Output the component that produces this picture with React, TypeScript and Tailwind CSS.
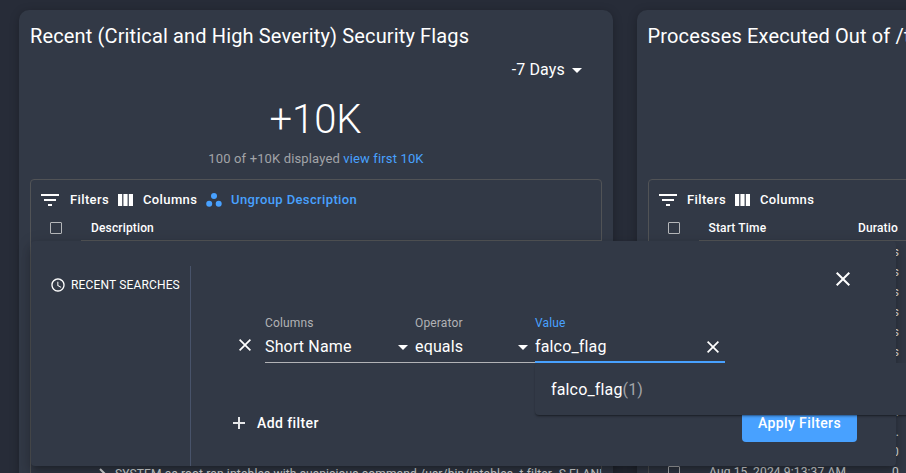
import React from "react";

function FilterIcon() {
  return (
    <svg width="18" height="12" viewBox="0 0 18 12" fill="#fff" className="shrink-0">
      <path d="M0 0h18v2H0zM3 5h12v2H3zM7 10h4v2H7z" />
    </svg>
  );
}

function ColumnsIcon() {
  return (
    <svg width="15" height="12" viewBox="0 0 15 12" fill="#fff" className="shrink-0">
      <path d="M0 0h4.2v12H0zM5.4 0h4.2v12H5.4zM10.8 0H15v12h-4.2z" />
    </svg>
  );
}

function GroupIcon() {
  return (
    <svg width="16" height="14" viewBox="0 0 16 14" fill="#48a1ff" className="shrink-0">
      <circle cx="8" cy="3" r="3" />
      <circle cx="3.2" cy="10.7" r="3" />
      <circle cx="12.7" cy="10.7" r="3" />
    </svg>
  );
}

function Caret() {
  return (
    <svg width="10" height="5" viewBox="0 0 10 5" fill="#fff" className="shrink-0">
      <path d="M0 0h10L5 5z" />
    </svg>
  );
}

function Cross({ size }: { size: number }) {
  return (
    <svg width={size} height={size} viewBox="0 0 14 14" fill="#fff" className="shrink-0">
      <path d="M14 1.41 12.59 0 7 5.59 1.41 0 0 1.41 5.59 7 0 12.59 1.41 14 7 8.41 12.59 14 14 12.59 8.41 7z" />
    </svg>
  );
}

function ClockIcon() {
  return (
    <svg width="16" height="16" viewBox="0 0 24 24" fill="#fff" className="shrink-0">
      <path d="M11.99 2C6.47 2 2 6.48 2 12s4.47 10 9.99 10C17.52 22 22 17.52 22 12S17.52 2 11.99 2zM12 20c-4.42 0-8-3.58-8-8s3.58-8 8-8 8 3.58 8 8-3.58 8-8 8zm.5-13H11v6l5.25 3.15.75-1.23-4.5-2.67z" />
    </svg>
  );
}

function Checkbox() {
  return <span className="size-3 shrink-0 rounded-[1px] border border-[#b5b7ba]" />;
}

function Toolbar({ grouped }: { grouped?: boolean }) {
  return (
    <div className="flex h-[37px] items-center pl-[10px] pt-[3px] text-[13px] font-medium tracking-[0.37px]">
      <FilterIcon />
      <span className={grouped ? "ml-[11px] w-12" : "ml-[10px] w-12"}>Filters</span>
      <ColumnsIcon />
      <span className="ml-[10px] w-[63px]">Columns</span>
      {grouped && (
        <>
          <GroupIcon />
          <span className="ml-[9px] text-[#48a1ff]">Ungroup Description</span>
        </>
      )}
    </div>
  );
}

const durations = ["0.5s", "0.5s", "0.5s", "0.5s", "0.5s", "0.5s", "0.5s", "0.5s", "0.", "0.", "0", "0"];

function Dialog() {
  return (
    <section className="absolute left-[31px] top-[241px] flex h-[225px] w-[865px] rounded-[4px] bg-[#323946] shadow-[0_5px_5px_-3px_rgba(0,0,0,0.2),0_8px_10px_1px_rgba(0,0,0,0.14),0_3px_14px_2px_rgba(0,0,0,0.12)]">
      <aside className="mt-[25px] w-40 border-r border-[#48536a] pl-[19px] pt-[9px]">
        <div className="flex items-center gap-[5px] text-xs leading-4 tracking-[0.15px]">
          <ClockIcon />
          <span className="whitespace-nowrap pt-[2px] leading-[17px]">RECENT SEARCHES</span>
        </div>
      </aside>
      <div className="flex flex-1 flex-col">
        <div className="flex h-[74px] justify-end pr-[46px] pt-[31px]">
          <Cross size={14} />
        </div>
        <div className="flex pl-[48px]">
          <div className="w-[26px] pt-[24px]">
            <Cross size={12} />
          </div>
          <label className="flex h-12 w-[150px] flex-col border-b border-[#b2b3b6]">
            <span className="text-xs leading-4 tracking-[0.15px] text-[#b1b2b5]">Columns</span>
            <span className="flex items-center justify-between pr-[7px] pt-1 text-base leading-6 tracking-[0.15px]">Short Name <Caret /></span>
          </label>
          <label className="flex h-12 w-[120px] flex-col border-b border-[#b2b3b6]">
            <span className="text-xs leading-4 tracking-[0.15px] text-[#b1b2b5]">Operator</span>
            <span className="flex items-center justify-between pr-[7px] pt-1 text-base leading-6 tracking-[0.15px]">equals <Caret /></span>
          </label>
          <label className="flex h-12 w-[190px] flex-col border-b-2 border-[#48a1ff]">
            <span className="text-xs leading-4 tracking-[0.15px] text-[#48a1ff]">Value</span>
            <span className="flex items-center justify-between pr-[6px] pt-1 text-base leading-6 tracking-[0.15px]">falco_flag <Cross size={12} /></span>
          </label>
        </div>
        <div className="mt-[41px] flex items-center justify-between pl-[42px] pr-[39px]">
          <button className="flex items-center gap-3 text-sm font-medium tracking-[0.4px]">
            <svg width="12" height="12" viewBox="0 0 12 12" fill="#e6e7e9"><path d="M5 0h2v5h5v2H7v5H5V7H0V5h5z" /></svg>
            Add filter
          </button>
          <button className="h-[38px] w-[115px] rounded-[4px] bg-[#48a1ff] text-sm font-medium tracking-[0.4px]">Apply Filters</button>
        </div>
      </div>
    </section>
  );
}

export default function App() {
  return (
    <main className="relative h-[473px] w-[906px] overflow-hidden bg-[#272c38] font-[Roboto,sans-serif] text-white">
      <div className="flex w-[1250px] gap-6 pl-[19px] pt-[10px]">
        <article className="h-[480px] w-[594px] rounded-[10px] bg-[#323946] px-[11px] shadow-[0_2px_10px_rgba(0,0,0,0.25)]">
          <h2 className="pt-[11px] text-xl leading-[30px] tracking-[0.14px]">Recent (Critical and High Severity) Security Flags</h2>
          <div className="mt-[7px] flex h-6 items-center justify-end gap-[7px] pr-5 text-base tracking-[0.15px]">
            -7 Days <Caret />
          </div>
          <div className="mt-[13px] pr-px text-center text-[40px] font-light leading-[50px]">+10K</div>
          <p className="mt-[4px] text-center text-[13px] leading-5 tracking-[0.14px] text-[#a2a4a8]">
            100 of +10K displayed <span className="text-[#48a1ff]">view first 10K</span>
          </p>
          <div className="mt-[10px] h-[320px] w-[572px] overflow-hidden rounded-t-[4px] border border-[#515356]">
            <Toolbar grouped />
            <div className="flex h-[23px] items-center pb-0.5 pl-[19px] text-xs font-medium tracking-[0.15px]">
              <Checkbox />
              <span className="ml-[29px]">Description</span>
            </div>
            <div className="ml-[50px] h-[224px] border-t border-[#515356]" />
            <div className="flex h-5 items-center pl-[67px] text-xs tracking-[0.15px] text-[#dfe0e2]">
              <svg width="9" height="12" viewBox="0 0 9 12" fill="none" stroke="currentColor" strokeWidth="2" className="shrink-0"><path d="m2 1 5 5-5 5" /></svg>
              <span className="ml-2 whitespace-nowrap">SYSTEM as root ran iptables with suspicious command /usr/bin/iptables -t filter -S FLANNEL-FWD</span>
            </div>
          </div>
        </article>
        <article className="h-[480px] w-[594px] rounded-[10px] bg-[#323946] px-[11px] shadow-[0_2px_10px_rgba(0,0,0,0.25)]">
          <h2 className="-ml-[0.5px] pt-[11px] text-xl leading-[30px] tracking-[0.14px]">Processes Executed Out of /tmp</h2>
          <div className="mt-[128px] h-[320px] w-[572px] overflow-hidden rounded-t-[4px] border border-[#515356]">
            <Toolbar />
            <div className="flex h-[23px] items-center pb-0.5 pl-[19px] text-xs font-medium tracking-[0.15px]">
              <Checkbox />
              <span className="ml-[28.5px] w-[149.5px]">Start Time</span>
              <span className="w-10 overflow-hidden">Duration</span>
            </div>
            <div className="mb-px ml-[50px] border-t border-[#515356]" />
            {durations.map((duration, index) => (
              <div key={index} className="flex h-5 items-center pl-[19px] text-xs tracking-[0.15px] text-[#dfe0e2]">
                <Checkbox />
                <span className="ml-[29px] w-[149px]">Aug 15, 2024 9:13:37 AM</span>
                <span className="w-[41px] text-right">{duration}</span>
              </div>
            ))}
          </div>
        </article>
      </div>
      <Dialog />
      <div className="absolute left-[535px] top-[363px] h-[52px] w-[400px] rounded-[4px] bg-[#323946] pl-4 pt-[15px] text-base leading-6 tracking-[0.15px] shadow-[0_2px_3px_-1px_rgba(0,0,0,0.4),0_1px_1px_rgba(0,0,0,0.14)]">
        falco_flag<span className="text-[#a2a4a8]">(1)</span>
      </div>
    </main>
  );
}
